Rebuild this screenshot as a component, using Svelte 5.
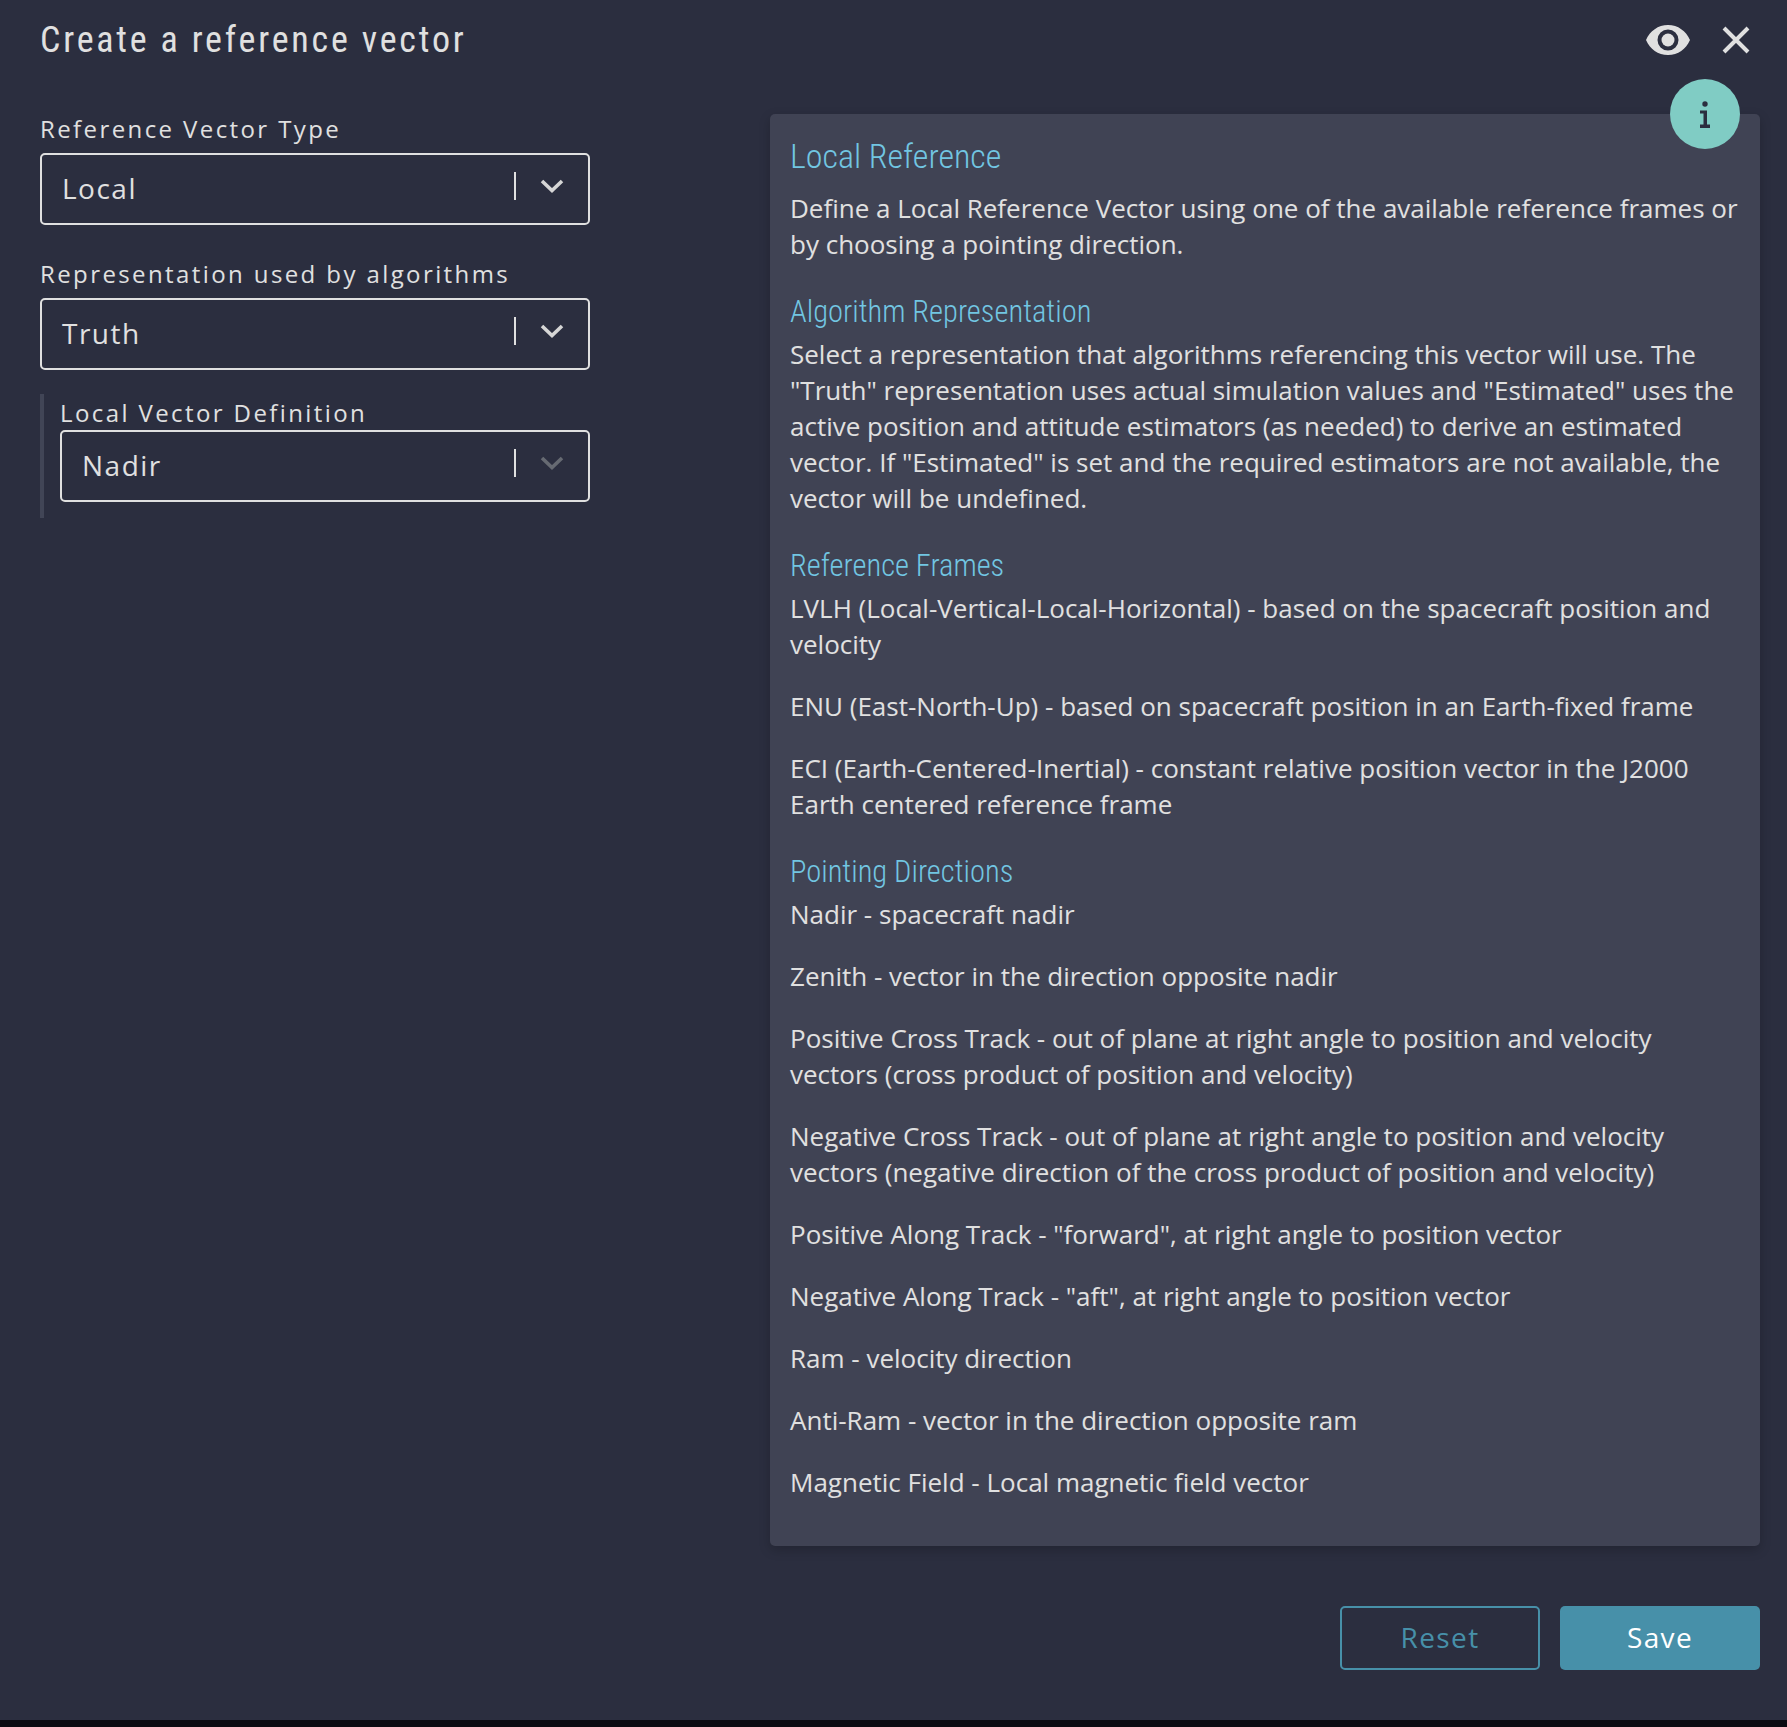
<script>
  const pointing = [
    ['Nadir - spacecraft nadir'],
    ['Zenith - vector in the direction opposite nadir'],
    ['Positive Cross Track - out of plane at right angle to position and velocity vectors (cross product of position and velocity)'],
    ['Negative Cross Track - out of plane at right angle to position and velocity vectors (negative direction of the cross product of position and velocity)'],
    ['Positive Along Track - "forward", at right angle to position vector'],
    ['Negative Along Track - "aft", at right angle to position vector'],
    ['Ram - velocity direction'],
    ['Anti-Ram - vector in the direction opposite ram'],
    ['Magnetic Field - Local magnetic field vector']
  ];
</script>

<div class="modal">
  <header class="top">
    <h1>Create a reference vector</h1>
    <div class="actions">
      <svg class="eye" viewBox="0 0 44 30" width="44" height="30">
        <path fill="#e0e0e0" fill-rule="evenodd" d="M22 0C32 0 40 6 44 15C40 24 32 30 22 30C12 30 4 24 0 15C4 6 12 0 22 0ZM22 4.500A10.500 10.500 0 1 0 22 25.500A10.500 10.500 0 1 0 22 4.500Z" />
        <circle cx="22" cy="15" r="6.500" fill="#e0e0e0" />
      </svg>
      <svg class="close" viewBox="0 0 28 28" width="28" height="28">
        <path d="M2 2L26 26M26 2L2 26" stroke="#e0e0e0" stroke-width="4" fill="none" />
      </svg>
    </div>
  </header>

  <div class="body">
    <div class="form">
      <div class="field">
        <span class="label">Reference Vector Type</span>
        <div class="select">
          <span class="value">Local</span>
          <span class="divider"></span>
          <svg class="chev" viewBox="0 0 24 14" width="24" height="14"><path d="M2 2L12 11.500L22 2" stroke="#d6d6d6" stroke-width="3.600" fill="none" /></svg>
        </div>
      </div>
      <div class="field">
        <span class="label">Representation used by algorithms</span>
        <div class="select">
          <span class="value">Truth</span>
          <span class="divider"></span>
          <svg class="chev" viewBox="0 0 24 14" width="24" height="14"><path d="M2 2L12 11.500L22 2" stroke="#d6d6d6" stroke-width="3.600" fill="none" /></svg>
        </div>
      </div>
      <div class="nested">
        <span class="label">Local Vector Definition</span>
        <div class="select">
          <span class="value">Nadir</span>
          <span class="divider"></span>
          <svg class="chev" viewBox="0 0 24 14" width="24" height="14"><path d="M2 2L12 11.500L22 2" stroke="#666a72" stroke-width="3.600" fill="none" /></svg>
        </div>
      </div>
    </div>

    <section class="help">
      <button class="info" aria-label="info">
        <svg viewBox="0 0 12 27" width="12" height="27">
          <circle cx="6" cy="3" r="2.700" fill="#2b2e3f" />
          <path fill="#2b2e3f" d="M1 9.500H8V23.500H11V27H1V23.500H4.500V12.500H1Z" />
        </svg>
      </button>
      <h2 class="first">Local Reference</h2>
      <p>Define a Local Reference Vector using one of the available reference frames or by choosing a pointing direction.</p>

      <h3>Algorithm Representation</h3>
      <p>Select a representation that algorithms referencing this vector will use. The "Truth" representation uses actual simulation values and "Estimated" uses the active position and attitude estimators (as needed) to derive an estimated vector. If "Estimated" is set and the required estimators are not available, the vector will be undefined.</p>

      <h3>Reference Frames</h3>
      <p>LVLH (Local-Vertical-Local-Horizontal) - based on the spacecraft position and velocity</p>
      <p>ENU (East-North-Up) - based on spacecraft position in an Earth-fixed frame</p>
      <p>ECI (Earth-Centered-Inertial) - constant relative position vector in the J2000 Earth centered reference frame</p>

      <h3>Pointing Directions</h3>
      {#each pointing as row}
        <p>{row[0]}</p>
      {/each}
    </section>
  </div>

  <footer class="foot">
    <button class="btn outline">Reset</button>
    <button class="btn solid">Save</button>
  </footer>
</div>

<style>
  :global(body) {
    margin: 0;
    background: #0b0b12;
  }

  * {
    box-sizing: border-box;
  }

  .modal {
    height: 1720px;
    background: #2b2e3f;
    color: #e0e0e0;
    font-family: "Open Sans", sans-serif;
    padding: 0 27px 0 40px;
    display: flex;
    flex-direction: column;
  }

  .top {
    height: 80px;
    display: flex;
    align-items: center;
    justify-content: space-between;
  }

  .top h1 {
    margin: 0;
    font-family: Roboto, sans-serif;
    font-stretch: condensed;
    font-weight: 400;
    font-size: 36px;
    letter-spacing: 2.8px;
    color: #e0e0e0;
  }

  .actions {
    display: flex;
    align-items: center;
    gap: 32px;
    padding-right: 10px;
  }

  .body {
    display: grid;
    grid-template-columns: 550px 990px;
    justify-content: space-between;
    margin-top: 34px;
  }

  .form {
    display: flex;
    flex-direction: column;
  }

  .field {
    margin-bottom: 34px;
  }

  .label {
    display: block;
    font-size: 24px;
    line-height: 30px;
    letter-spacing: 2.4px;
    color: #e0e0e0;
    margin-bottom: 9px;
  }

  .select {
    height: 72px;
    border: 2px solid #e0e0e0;
    border-radius: 5px;
    display: flex;
    align-items: center;
    padding: 0 21px 0 20px;
  }

  .value {
    flex: 1;
    font-size: 28px;
    letter-spacing: 1.5px;
    padding-bottom: 2px;
  }

  .divider {
    width: 2px;
    height: 28px;
    background: #e0e0e0;
    margin: 0 24px 6px 0;
  }

  .chev {
    margin: 0 3px 6px 0;
  }

  .nested {
    margin-top: -10px;
    border-left: 4px solid #414556;
    padding: 4px 0 16px 16px;
    height: 124px;
  }

  .nested .label {
    margin-bottom: 2px;
  }

  .help {
    position: relative;
    background: #404354;
    border-radius: 5px;
    height: 1432px;
    padding: 20px;
    box-shadow: 0 4px 12px rgba(0, 0, 0, 0.2);
  }

  .info {
    position: absolute;
    top: -35px;
    right: 20px;
    width: 70px;
    height: 70px;
    border: none;
    border-radius: 50%;
    background: #80ccc4;
    display: flex;
    align-items: center;
    justify-content: center;
    padding: 0;
  }

  h2,
  h3 {
    margin: 0;
    font-family: Roboto, sans-serif;
    font-stretch: condensed;
    font-weight: 300;
    color: #72c6e2;
  }

  h2 {
    font-size: 34px;
    line-height: 44px;
    margin-bottom: 12px;
  }

  h3 {
    font-size: 30.500px;
    line-height: 40px;
    margin-top: 30px;
    margin-bottom: 4px;
  }

  p {
    margin: 0 0 26px;
    font-size: 26px;
    line-height: 36px;
    color: #e0e0e0;
  }

  .foot {
    display: flex;
    justify-content: flex-end;
    gap: 20px;
    margin-top: 60px;
  }

  .btn {
    width: 200px;
    height: 64px;
    border-radius: 5px;
    font-family: "Open Sans", sans-serif;
    font-size: 28px;
    letter-spacing: 1.4px;
    padding: 0 0 2px;
  }

  .outline {
    background: transparent;
    border: 2px solid #4790a9;
    color: #4790a9;
  }

  .solid {
    background: #4790a9;
    border: none;
    color: #fff;
  }
</style>
